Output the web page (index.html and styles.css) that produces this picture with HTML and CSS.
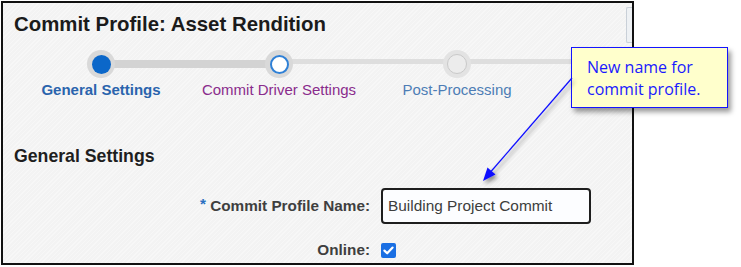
FILE: index.html
```html
<!DOCTYPE html>
<html>
<head>
<meta charset="utf-8">
<link rel="stylesheet" href="styles.css">
</head>
<body>
  <div class="frame">
    <div class="scroll-thumb"></div>
    <h1 class="title">Commit Profile: Asset Rendition</h1>
    <div class="stepper">
      <div class="step done"><span class="dot"></span><span class="label">General Settings</span></div>
      <div class="step current"><span class="dot"></span><span class="label">Commit Driver Settings</span></div>
      <div class="step todo"><span class="dot"></span><span class="label">Post-Processing</span></div>
    </div>
    <h2 class="section">General Settings</h2>
    <div class="form">
      <span class="flabel"><span class="req">*</span> Commit Profile Name:</span>
      <div class="input">Building Project Commit</div>
      <span class="flabel">Online:</span>
      <span class="check"><svg viewBox="0 0 15 15" width="15" height="15"><path d="M3.4 7.6 L6.2 10.3 L11.6 4.6" fill="none" stroke="#fff" stroke-width="2.2" stroke-linecap="round" stroke-linejoin="round"/></svg></span>
    </div>
  </div>
  <div class="callout">New name for<br>commit profile.</div>
  <svg class="arrow" width="741" height="267" viewBox="0 0 741 267">
    <defs>
      <filter id="sh" x="-20%" y="-20%" width="140%" height="140%">
        <feDropShadow dx="2" dy="3" stdDeviation="2" flood-color="#000" flood-opacity="0.45"/>
      </filter>
    </defs>
    <g filter="url(#sh)">
      <line x1="572" y1="78" x2="491" y2="171.5" stroke="#1010ff" stroke-width="1.2"/>
      <polygon points="483,181 495.5,174.5 487.5,167.5" fill="#1010ff"/>
    </g>
  </svg>
</body>
</html>
```
FILE: styles.css
```css
body {
  margin: 0;
  background: #ffffff;
  font-family: "Liberation Sans", Arial, sans-serif;
  position: relative;
  width: 741px;
  height: 267px;
  overflow: hidden;
}

.frame {
  position: relative;
  margin: 1px 0 0 1px;
  width: 629px;
  height: 260px;
  border: 2px solid #111111;
  overflow: hidden;
  background-color: #f3f3f3;
  background-image: repeating-linear-gradient(-45deg, rgba(255,255,255,0.35) 0 1px, rgba(255,255,255,0) 1px 3px);
}

.scroll-thumb {
  position: absolute;
  right: 0;
  top: 4px;
  width: 5px;
  height: 34px;
  border: 1px solid #c9d0d8;
  border-right: none;
  border-radius: 2px 0 0 2px;
  background: #eef1f4;
}

.title {
  margin: 9px 0 0 11px;
  font-size: 20.4px;
  line-height: 24px;
  font-weight: bold;
  color: #1b1b1b;
}

.stepper {
  display: grid;
  grid-template-columns: repeat(3, 178px);
  margin: 14px 0 0 9px;
}

.step {
  position: relative;
  display: flex;
  flex-direction: column;
  align-items: center;
}

.step::after {
  content: "";
  position: absolute;
  left: 50%;
  width: 100%;
  top: 10px;
  height: 8px;
  background: #d3d3d3;
}

.step.current::after,
.step.todo::after {
  top: 9px;
  height: 5px;
  background: #dedede;
}

.step:last-child::after {
  width: 200px;
}

.dot {
  position: relative;
  z-index: 1;
  width: 28px;
  height: 28px;
  border-radius: 50%;
  background: #d9d9d9;
  display: flex;
  align-items: center;
  justify-content: center;
}

.dot::before {
  content: "";
  box-sizing: border-box;
  width: 19px;
  height: 19px;
  border-radius: 50%;
}

.done .dot::before {
  background: #0b67c9;
}

.current .dot::before {
  background: #ffffff;
  border: 2px solid #2f80d6;
}

.todo .dot {
  background: #e3e3e3;
}

.todo .dot::before {
  width: 20px;
  height: 20px;
  background: #ececec;
  border: 1px solid #c9c9c9;
}

.label {
  margin-top: 3px;
  font-size: 15px;
  line-height: 18px;
  white-space: nowrap;
}

.done .label {
  color: #2a64ad;
  font-weight: bold;
}

.current .label {
  color: #8a2c8c;
}

.todo .label {
  color: #4d7db5;
}

.section {
  margin: 47px 0 0 11px;
  font-size: 17.7px;
  line-height: 20px;
  font-weight: bold;
  color: #1e1e1e;
}

.form {
  display: grid;
  grid-template-columns: 367px 210px;
  column-gap: 11px;
  row-gap: 17px;
  margin-top: 22px;
  align-items: center;
}

.flabel {
  text-align: right;
  font-size: 15.3px;
  line-height: 18px;
  font-weight: bold;
  color: #3f3f3f;
  white-space: nowrap;
}

.req {
  color: #2a6fc0;
  position: relative;
  top: -2px;
}

.input {
  box-sizing: border-box;
  height: 36px;
  border: 2px solid #1e1e1e;
  border-radius: 4px;
  background: #fcfdff;
  padding-left: 5px;
  font-size: 15.4px;
  line-height: 32px;
  color: #3d3d3d;
}

.check {
  width: 15px;
  height: 15px;
  border-radius: 2px;
  background: #1a6fe3;
  display: flex;
  margin-top: 1px;
}

.callout {
  position: absolute;
  z-index: 5;
  left: 571px;
  top: 47px;
  box-sizing: border-box;
  width: 157px;
  height: 61px;
  border: 1px solid #1414ff;
  background: #ffffcc;
  padding: 8px 0 0 15px;
  font-family: "Open Sans", sans-serif;
  font-size: 16px;
  line-height: 22px;
  color: #1a1aff;
  box-shadow: 3px 4px 5px rgba(0, 0, 0, 0.4);
}

.arrow {
  position: absolute;
  z-index: 6;
  left: 0;
  top: 0;
  pointer-events: none;
}
```
